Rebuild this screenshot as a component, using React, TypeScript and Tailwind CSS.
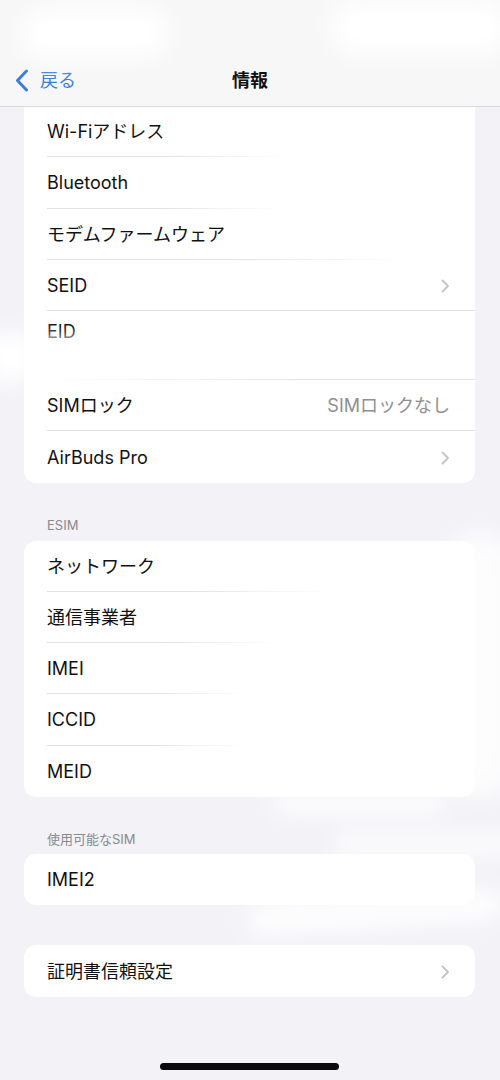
import React from "react";

type Row = {
  label: string;
  value?: string;
  chevron?: boolean;
  sep?: string;
  tall?: boolean;
};

const Chevron = () => (
  <svg width="9" height="14" viewBox="0 0 9 14" className="shrink-0">
    <path d="M1.5 1.5 L7 7 L1.5 12.5" fill="none" stroke="#c4c4c8" strokeWidth="1.8" strokeLinecap="round" strokeLinejoin="round" />
  </svg>
);

function Card({ rows, className = "", rowH = "h-[51.3px]" }: { rows: Row[]; className?: string; rowH?: string }) {
  return (
    <div className={"mx-[24px] w-[451px] bg-white overflow-hidden " + className}>
      {rows.map((r, i) => (
        <div key={i} className={"relative flex pl-[23px] pr-[25px] " + (r.tall ? "h-[69px] items-start pt-[9px]" : rowH + " items-center pt-[1px]")}>
          <span className="flex-1 text-[18px] text-[#111] leading-[24px]">{r.label}</span>
          {r.value && <span className="text-[18px] text-[#8e8e93] leading-[24px]">{r.value}</span>}
          {r.chevron && <Chevron />}
          {r.sep && <div className={"absolute bottom-0 h-px " + r.sep} />}
        </div>
      ))}
    </div>
  );
}

export default function App() {
  const card1: Row[] = [
    { label: "Wi-Fiアドレス", sep: "left-[23px] w-[240px] bg-gradient-to-r from-[#e2e2e5] via-[#e2e2e5] to-transparent" },
    { label: "Bluetooth", sep: "left-[23px] w-[232px] bg-gradient-to-r from-[#e2e2e5] via-[#e2e2e5] to-transparent" },
    { label: "モデムファームウェア", sep: "left-[23px] w-[360px] bg-gradient-to-r from-[#e2e2e5] via-[#e2e2e5] to-transparent" },
    { label: "SEID", chevron: true, sep: "left-[23px] right-0 bg-[#e2e2e5]" },
    { label: "EID", tall: true, sep: "left-[23px] right-0 bg-gradient-to-r from-transparent via-[#e2e2e5] to-[#e2e2e5]" },
    { label: "SIMロック", value: "SIMロックなし", sep: "left-[23px] right-0 bg-[#e2e2e5]" },
    { label: "AirBuds Pro", chevron: true },
  ];
  const card2: Row[] = [
    { label: "ネットワーク", sep: "left-[23px] w-[280px] bg-gradient-to-r from-[#e2e2e5] via-[#e2e2e5] to-transparent" },
    { label: "通信事業者", sep: "left-[23px] w-[230px] bg-gradient-to-r from-[#e2e2e5] via-[#e2e2e5] to-transparent" },
    { label: "IMEI", sep: "left-[23px] w-[200px] bg-gradient-to-r from-[#e2e2e5] via-[#e2e2e5] to-transparent" },
    { label: "ICCID", sep: "left-[23px] w-[200px] bg-gradient-to-r from-[#e2e2e5] via-[#e2e2e5] to-transparent" },
    { label: "MEID" },
  ];

  return (
    <div
      className="relative w-[500px] h-[1080px] bg-[#f2f2f7] overflow-hidden"
      style={{ fontFamily: 'Inter, "Noto Sans CJK JP", sans-serif' }}
    >
      {/* Nav bar */}
      <div className="relative z-10 h-[107px] bg-[#f7f7f8] border-b border-[#d9d9dc] flex flex-col justify-end">
        <div className="relative h-[54px] flex items-center pt-[3px]">
          <div className="flex items-center pl-[15px] gap-[11px] text-[#3b7dd8]">
            <svg width="14" height="23" viewBox="0 0 14 23">
              <path d="M11.5 2 L2.5 11.5 L11.5 21" fill="none" stroke="#3b7dd8" strokeWidth="3" strokeLinecap="round" strokeLinejoin="round" />
            </svg>
            <span className="text-[18px] leading-[24px]">戻る</span>
          </div>
          <div className="absolute inset-x-0 text-center text-[18px] font-bold text-[#111] leading-[24px]">情報</div>
        </div>
      </div>

      {/* Content */}
      <div className="-mt-[1px]">
        <Card rows={card1} className="rounded-b-[12px]" />
        <div className="h-[58px] flex items-end pb-[8px] pl-[47px] text-[13px] leading-[16px] text-[#8a8a8e]">ESIM</div>
        <Card rows={card2} className="rounded-[12px]" rowH="h-[51.2px]" />
        <div className="h-[57px] flex items-end pb-[7px] pl-[47px] text-[13px] leading-[16px] text-[#8a8a8e]">使用可能なSIM</div>
        <Card rows={[{ label: "IMEI2" }]} className="rounded-[12px]" />
        <div className="h-[40px]" />
        <Card rows={[{ label: "証明書信頼設定", chevron: true }]} className="rounded-[12px]" rowH="h-[52px]" />
      </div>

      {/* Home indicator */}
      <div className="absolute left-[160px] top-[1063px] w-[179px] h-[7px] rounded-full bg-[#0a0a0a]" />

      {/* Redaction smudges */}
      <div className="absolute z-20 left-[20px] top-[8px] w-[150px] h-[50px] rounded-full bg-white blur-md" />
      <div className="absolute z-20 left-[330px] top-[0px] w-[180px] h-[55px] rounded-full bg-white blur-md" />
      <div className="absolute left-[-20px] top-[330px] w-[60px] h-[55px] rounded-full bg-white blur-md" />
      <div className="absolute left-[30px] top-[338px] w-[260px] h-[36px] bg-white blur-sm" />
      <div className="absolute left-[440px] top-[530px] w-[80px] h-[270px] rounded-full bg-white/80 blur-md" />
      <div className="absolute left-[270px] top-[794px] w-[180px] h-[20px] rounded-full bg-white blur-md" />
      <div className="absolute left-[330px] top-[832px] w-[190px] h-[25px] rounded-full bg-white/80 blur-md" />
      <div className="absolute left-[245px] top-[897px] w-[260px] h-[30px] rounded-full bg-white blur-md rotate-[-4deg]" />
    </div>
  );
}
